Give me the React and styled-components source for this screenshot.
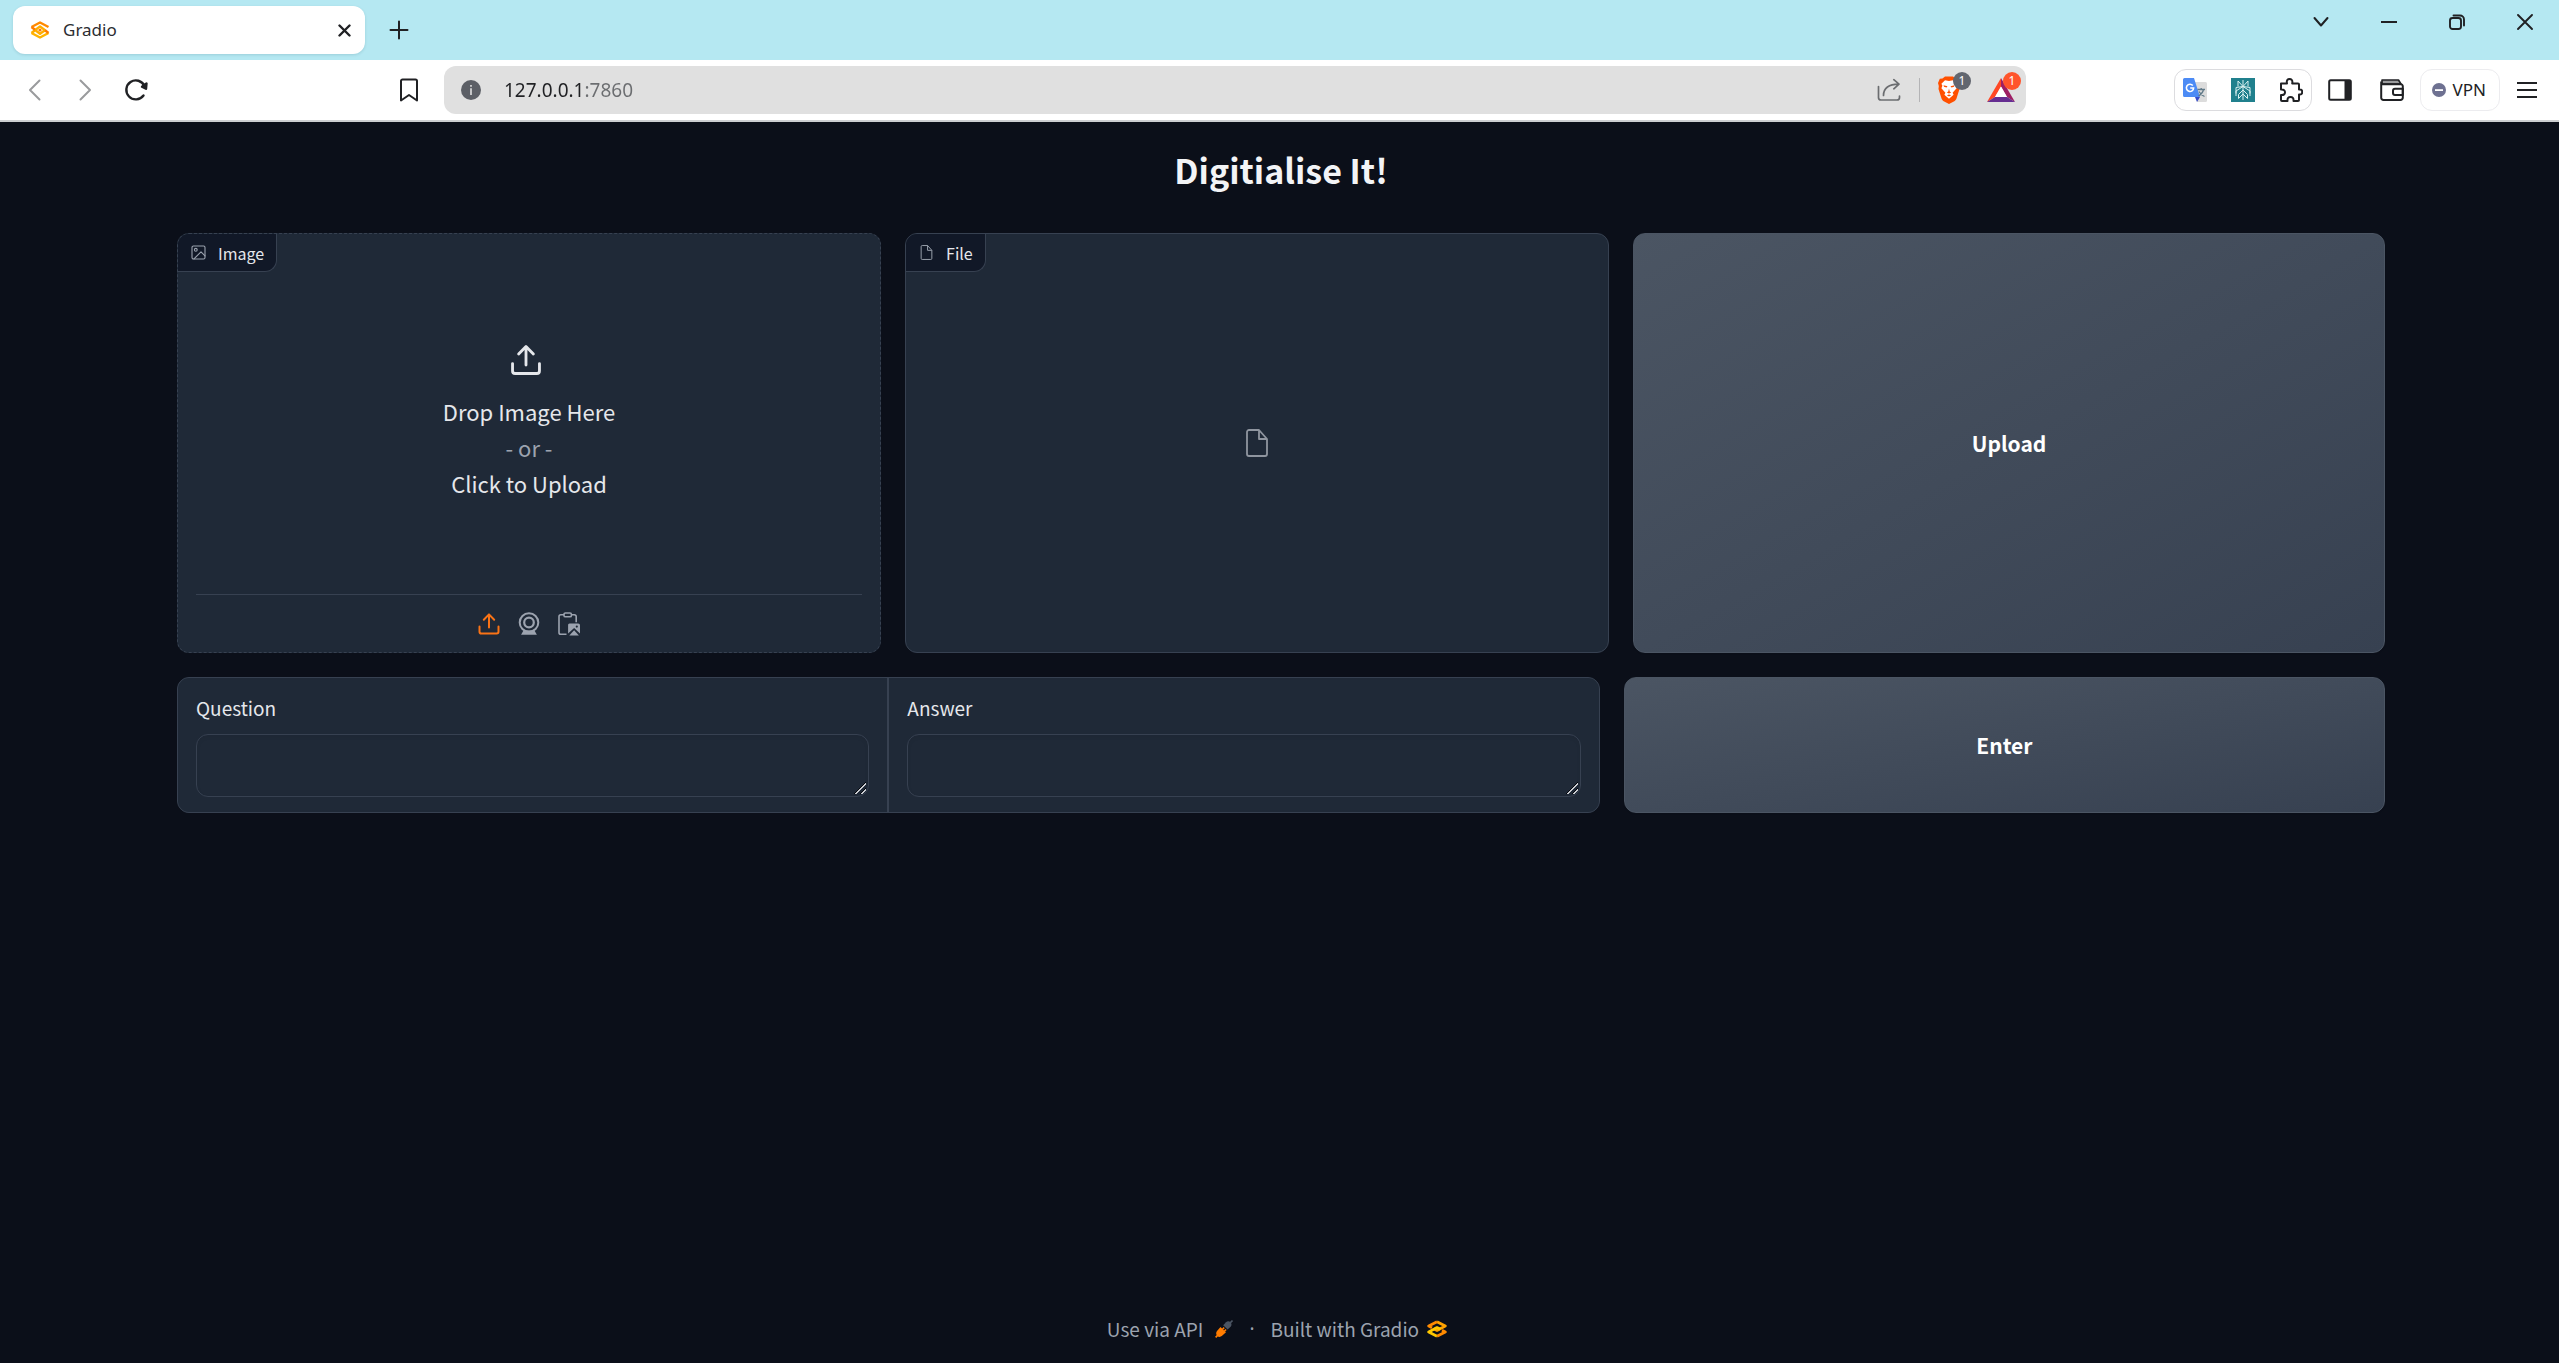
import React from "react";
import styled, { createGlobalStyle, css } from "styled-components";

const ui = '"Noto Sans CJK SC", "Noto Sans", sans-serif';
const chrome = '"Noto Sans", "Open Sans", sans-serif';

const GlobalStyle = createGlobalStyle`
  *, *::before, *::after { box-sizing: border-box; }
  body { margin: 0; background: #0b0f19; font-family: ${ui}; }
  button { font: inherit; color: inherit; border: 0; padding: 0; background: none; cursor: pointer; }
  a { color: inherit; text-decoration: none; }
  svg { display: block; flex: none; }
`;

const Window = styled.div`
  min-height: 100vh;
  display: flex;
  flex-direction: column;
`;

/* ---------- Browser frame ---------- */

const TabStrip = styled.div`
  height: 60px;
  flex: none;
  display: flex;
  align-items: center;
  gap: 14px;
  padding-left: 13px;
  background: #b5e8f2;
  font-family: ${chrome};
`;

const Tab = styled.div`
  width: 352px;
  height: 48px;
  display: flex;
  align-items: center;
  gap: 13px;
  padding: 0 10px 0 17px;
  border-radius: 12px;
  background: #fff;
  box-shadow: 0 1px 3px rgba(0, 60, 80, 0.15);
  font-size: 17px;
  line-height: 24px;
  color: #2b2d31;
`;

const TabTitle = styled.span`
  flex: 1;
`;

const IconButton = styled.button`
  width: ${(p) => p.$w || 24}px;
  height: ${(p) => p.$h || 24}px;
  flex: none;
  display: flex;
  align-items: center;
  justify-content: center;
  color: ${(p) => p.$color || "#202124"};
`;

const WindowControls = styled.div`
  display: flex;
  align-self: flex-start;
  margin-left: auto;
`;

const Toolbar = styled.div`
  height: 62px;
  flex: none;
  display: flex;
  align-items: center;
  padding: 0 16px 0 10px;
  background: #fff;
  border-bottom: 2px solid #cdcfd1;
  font-family: ${chrome};
`;

const NavGroup = styled.div`
  display: flex;
  flex: 382 1 0;
  min-width: 160px;
`;

const Omnibox = styled.div`
  flex: 1562 1 0;
  height: 48px;
  display: flex;
  align-items: center;
  margin-left: 18px;
  padding: 0 3px 0 17px;
  border-radius: 12px;
  background: #e0e0e0;
`;

/* The host is dark and the port grey: one gradient painted through the text. */
const Address = styled.input`
  flex: 1;
  min-width: 0;
  margin-left: 23px;
  padding: 0;
  border: 0;
  outline: 0;
  font: 19px/28px ${chrome};
  background: linear-gradient(90deg, #202124 81px, #6b6d70 81px);
  background-clip: text;
  -webkit-text-fill-color: transparent;
`;

const Separator = styled.span`
  width: 1px;
  height: 24px;
  margin: 0 3px 0 18px;
  background: #b4b4b6;
`;

const BadgedButton = styled.button`
  && {
    position: relative;
    width: 40px;
    height: 44px;
    display: flex;
    align-items: center;
    margin-left: 10px;
    padding-left: 4px;
  }
`;

const Badge = styled.span`
  position: absolute;
  top: 4px;
  left: 20px;
  width: 18px;
  height: 18px;
  border-radius: 9px;
  background: ${(p) => p.$bg};
  color: #fff;
  font-size: 12px;
  line-height: 18px;
  text-align: center;
`;

const Actions = styled.div`
  flex: 517 1 0;
  min-width: 385px;
  display: flex;
  align-items: center;
  justify-content: flex-end;
`;

const Pill = styled.div`
  height: 42px;
  display: flex;
  align-items: center;
  gap: 24px;
  margin-right: 2px;
  padding: 0 8px;
  border: 1px solid #dcdcdf;
  border-radius: 12px;
`;

const VpnButton = styled.button`
  && {
    height: 42px;
    display: flex;
    align-items: center;
    gap: 7px;
    margin: 0 11px 0 2px;
    padding: 0 13px 0 11px;
    border: 1px solid #ececef;
    border-radius: 12px;
    font-size: 17px;
    line-height: 24px;
    color: #202124;
  }
`;

/* ---------- Page ---------- */

const Page = styled.main`
  flex: 1;
  display: flex;
  flex-direction: column;
  padding: 22px 174px 16px 177px;
`;

const Title = styled.h1`
  margin: 0 0 37px;
  font-size: 34px;
  line-height: 52px;
  font-weight: 700;
  text-align: center;
  color: #f3f4f6;
`;

const Row = styled.div`
  display: flex;
  gap: 24px;
  margin-bottom: 24px;
`;

const surface = css`
  background: #1f2937;
  border: 1px solid #374151;
  border-radius: 12px;
`;

const Panel = styled.section`
  ${surface}
  border-style: ${(p) => (p.$dashed ? "dashed" : "solid")};
  position: relative;
  flex: 704 1 0;
  height: 420px;
  display: flex;
  flex-direction: column;
  overflow: hidden;
`;

const PanelLabel = styled.h2`
  position: absolute;
  top: 0;
  left: 0;
  height: 38px;
  margin: 0;
  display: flex;
  align-items: center;
  gap: 12px;
  padding: 0 12px 0 13px;
  border: solid #374151;
  border-width: 0 1px 1px 0;
  border-bottom-right-radius: 12px;
  background: #111827;
  font-size: 16px;
  line-height: 24px;
  font-weight: 400;
  color: #e5e7eb;

  svg { color: #9ca3af; }
`;

const DropZone = styled.button`
  && {
    flex: 1;
    display: flex;
    flex-direction: column;
    align-items: center;
    justify-content: center;
    padding-top: 16px;
    font-size: 22px;
    line-height: 36px;
    color: #e5e7eb;
  }

  svg { margin: 0 6px 16px 0; }
`;

const Muted = styled.span`
  color: #9ca3af;
`;

const Sources = styled.div`
  display: flex;
  justify-content: center;
  align-items: center;
  gap: 16px;
  height: 58px;
  margin: 0 18px;
  border-top: 1px solid #374151;
`;

const EmptyState = styled.div`
  flex: 1;
  display: flex;
  align-items: center;
  justify-content: center;
  color: #8f959f;
`;

const ActionButton = styled.button`
  && {
    flex: ${(p) => p.$grow} 1 0;
    border: 1px solid #4b5563;
    border-radius: 12px;
    background: linear-gradient(to bottom right, #4b5563, #374151);
    box-shadow: 0 1px 2px rgba(0, 0, 0, 0.05);
    font-size: 21px;
    line-height: 28px;
    font-weight: 700;
    color: #fff;
  }
`;

const Form = styled.div`
  ${surface}
  flex: 1422 1 0;
  display: flex;
  gap: 2px;
  background: #374151;
  overflow: hidden;
`;

const Field = styled.label`
  flex: 1;
  display: flex;
  flex-direction: column;
  gap: 12px;
  padding: 15px 18px;
  background: #1f2937;
  font-size: 19px;
  line-height: 29px;
  color: #e5e7eb;
`;

const TextArea = styled.textarea`
  height: 63px;
  padding: 12px;
  border: 1px solid #374151;
  border-radius: 12px;
  background: #1f2937;
  box-shadow: inset 0 2px 4px rgba(0, 0, 0, 0.05);
  font: inherit;
  color: inherit;
  resize: vertical;

  &::-webkit-resizer {
    background: linear-gradient(
        135deg,
        transparent 48%, #05070c 48% 53%, #c9ccd1 53% 61%,
        transparent 61% 72%, #05070c 72% 77%, #c9ccd1 77% 85%, transparent 85%
      )
      1px 1px / 12px 12px no-repeat;
  }
`;

const Footer = styled.footer`
  display: flex;
  align-items: center;
  justify-content: center;
  gap: 16px;
  margin-top: auto;
  padding-right: 8px;
  font-size: 19px;
  line-height: 36px;
  color: #9ca3af;
`;

const Dot = styled.span`
  font-family: ${chrome};
`;

const FooterLink = styled.a`
  display: flex;
  align-items: center;
  gap: ${(p) => p.$gap}px;
`;

/* ---------- Icons ---------- */

const Line = ({ size = 24, box = 24, w = 2, children, ...rest }) => (
  <svg width={size} height={size} viewBox={`0 0 ${box} ${box}`} fill="none" stroke="currentColor"
    strokeWidth={w} strokeLinecap="round" strokeLinejoin="round" aria-hidden="true" {...rest}>
    {children}
  </svg>
);

const GradioMark = () => (
  <svg width="20" height="18" viewBox="0 0 20 18" fill="none" strokeWidth="2.8" strokeLinejoin="round" aria-hidden="true">
    <path d="M10 1.800 18.300 6 10 10.400 6.600 8.700" stroke="#ffa200" />
    <path d="M10 16.200 1.700 12 10 7.600l3.400 1.700" stroke="#ffc800" />
    <path d="M10 1.800 1.700 6 5 7.800" stroke="#ff8a00" />
    <path d="M10 16.200 18.300 12 15 10.200" stroke="#ff8a00" />
  </svg>
);

const GradioFavicon = () => (
  <svg width="20" height="18" viewBox="0 0 20 18" fill="none" strokeWidth="2.4" strokeLinejoin="round" aria-hidden="true">
    <path d="M1.500 6 10 1.500 18.500 6" stroke="#ff8a00" />
    <path d="M1.500 12 10 16.500 18.500 12" stroke="#ffb300" />
    <path d="M1.500 12 5 9.200 10 5.400l5 3.800-5 3.600-4-3" stroke="#ffae00" />
    <path d="m15 9.200 3.500 2.800M1.500 6 5 8.800" stroke="#ff7c00" />
    <circle cx="10" cy="9" r="1.600" fill="#ff7c00" />
  </svg>
);

const UploadIcon = ({ size, color }) => (
  <Line size={size} style={{ color }}>
    <path d="M2.500 14.500v5.200a1.800 1.800 0 0 0 1.800 1.800h15.400a1.800 1.800 0 0 0 1.800-1.800v-5.200M12 15.500v-13M6.800 7.800 12 2.400l5.200 5.400" />
  </Line>
);

const FileIcon = ({ w = 22, h = 28 }) => (
  <svg width={w} height={h} viewBox="0 0 22 28" fill="none" stroke="currentColor" strokeWidth="1.800" strokeLinejoin="round" aria-hidden="true">
    <path d="M13 1H3a2 2 0 0 0-2 2v22a2 2 0 0 0 2 2h16a2 2 0 0 0 2-2V10ZM13 1v9h8" />
  </svg>
);

const ImageIcon = () => (
  <Line size={15} box={15} w={1.1}>
    <rect x="1" y="1" width="13" height="13" rx="1.400" />
    <circle cx="4.800" cy="4.800" r="1.400" />
    <path d="m3 13.800 7-7 4 4" />
  </Line>
);

const WebcamIcon = () => (
  <svg width="24" height="24" viewBox="0 0 24 24" fill="none" stroke="#9ca3af" strokeWidth="2" aria-hidden="true">
    <circle cx="12" cy="10.500" r="9.300" />
    <circle cx="12" cy="10.500" r="4.800" strokeWidth="2.200" />
    <path d="M6.500 18.600h11l2.400 4.200H4.100Z" fill="#9ca3af" stroke="none" />
  </svg>
);

const ClipboardIcon = () => (
  <svg width="24" height="24" viewBox="0 0 24 24" fill="none" stroke="#9ca3af" strokeWidth="1.600" strokeLinejoin="round" aria-hidden="true">
    <path d="M9.500 22.200H3.800A1.800 1.800 0 0 1 2 20.400V4.600a1.800 1.800 0 0 1 1.800-1.800H7M14 2.800h3.400a1.800 1.800 0 0 1 1.800 1.800v5.600" />
    <rect x="7" y="1" width="7.400" height="3.800" rx="1.400" />
    <path d="M12.500 11.500h8.700a1.800 1.800 0 0 1 1.800 1.800v8.200l-5.900-5.600-6 5.600v-8.200c0-1 .5-1.800 1.400-1.800Z" fill="#9ca3af" stroke="none" />
    <path d="m17.100 18.200 4.800 5.300h-9.600Z" fill="#9ca3af" stroke="none" />
    <circle cx="19.800" cy="14.600" r="1.100" fill="#1f2937" stroke="none" />
  </svg>
);

const PlugIcon = () => (
  <svg width="18" height="18" viewBox="0 0 18 18" aria-hidden="true">
    <path d="M2 11 5.500 7l1.800 1.700L9 10.400l2 1.800-4.200 3.900c-1.400 1.100-3.300 1-4.500-.1-1.400-1.300-1.500-3.600-.3-5Z" fill="#ff7c00" />
    <path d="m.6 17.400 3-3M7.300 9.500l1.900-1.900M9.200 11.400l1.900-1.900" stroke="#ff7c00" strokeWidth="1.600" />
    <path d="M8.200 5.200 11 2.300c1.300-1.300 3.200-1.200 4.500 0s1.300 3.200.1 4.500l-3 2.800Z" fill="#4b5563" />
    <path d="m14.500 3.500 3-3" stroke="#4b5563" strokeWidth="1.600" />
  </svg>
);

const ShareIcon = () => (
  <Line size={24} w={1.7}>
    <path d="M1.500 8.500v11a2.500 2.500 0 0 0 2.500 2.500h16a2.500 2.500 0 0 0 2.500-2.500V18M6.500 17.500C6.500 10 12 6.200 21.500 6.200M16.800 1.700l5.200 4.500-5.200 4.600" />
  </Line>
);

const BraveIcon = () => (
  <svg width="24" height="28" viewBox="0 0 24 28" aria-hidden="true">
    <path d="m5.500 2.500 2.500-2h8l2.500 2 2.700.3L23 7l-.8 3 .3 3-3 9.500c-.4 1.200-1.200 2-2.200 2.700L12 28l-5.300-2.800c-1-.7-1.800-1.500-2.200-2.700L1.500 13l.3-3L1 7l1.800-4.200Z" fill="#ff5000" />
    <path d="m12 5 4-.8 3.600 3.600-1 2 1 2.400-4 4.600 1 2-4.600 4-4.600-4 1-2-4-4.600 1-2.400-1-2L8 4.200Z" fill="#fff" />
    <path d="m6.500 9.200 4 1-1 1.200-2.500-.7ZM17.500 9.200l-4 1 1 1.200 2.500-.7ZM12 12.500l.7 3 1.500 1-2.200 1-2.200-1 1.500-1ZM9.800 19.200l2.200-.6 2.200.6-2.200 1.400Z" fill="#ff5000" />
  </svg>
);

const BatIcon = () => (
  <svg width="28" height="24" viewBox="0 0 28 24" aria-hidden="true">
    <path d="M14 0 0 24l8-5L14 8.500Z" fill="#ff4724" />
    <path d="m14 0 14 24-8-5L14 8.500Z" fill="#9e1f63" />
    <path d="M0 24h28l-8-5H8Z" fill="#662d91" />
    <path d="m14 8.500 6 10.500H8Z" fill="#fff" />
  </svg>
);

const TranslateIcon = () => (
  <svg width="24" height="24" viewBox="0 0 24 24" aria-hidden="true">
    <path d="M9 4h13.500A1.500 1.500 0 0 1 24 5.500v17a1.500 1.500 0 0 1-1.500 1.500H14Z" fill="#dcdcdc" />
    <path d="M1.500 0H11l6 19H1.500A1.500 1.500 0 0 1 0 17.500v-16A1.500 1.500 0 0 1 1.500 0Z" fill="#4c8bf5" />
    <path d="m12 19 5 0-3 5Z" fill="#3549c8" />
    <path d="M9.800 7.600A3.600 3.600 0 1 0 10.600 10H7.200" stroke="#fff" strokeWidth="1.600" fill="none" />
    <path d="M14.500 11.500h7.500M18.200 10v1.500M20.500 11.500c-.6 3-2.600 5-5 6.500M16 13.500c1 2 3 4 5.500 5" stroke="#607988" strokeWidth="1.300" fill="none" />
  </svg>
);

const PerplexityIcon = () => (
  <svg width="24" height="24" viewBox="0 0 24 24" fill="none" stroke="#d9f0f0" strokeWidth="1" aria-hidden="true">
    <path d="M0 0h24v24H0z" fill="#20808d" stroke="none" />
    <path d="M12 2v20M12 8.500 7 3v5.500M12 8.500 17 3v5.500M12 8.500 5 13v5M12 8.500l7 4.500v5M5 15.500V9.500L12 8.500l7 1v6M12 12l-4.500 4.500v4L12 16l4.500 4.500v-4Z" />
  </svg>
);

const PuzzleIcon = () => (
  <Line size={24} w={2}>
    <path d="M2 5.500h6c-.8-3.800 1-4.500 2.500-4.500S14 1.700 13.200 5.500H19a1 1 0 0 1 1 1v5c3-.4 3.200 1.300 3.200 2.500S22.800 16.800 20 16.500V22a1 1 0 0 1-1 1h-4.500c.3-3-1-4-3-4s-3.300 1-3 4H3a1 1 0 0 1-1-1v-5c3 .3 4-1 4-2.700S5 11.200 2 11.500Z" />
  </Line>
);

const SidebarIcon = () => (
  <svg width="24" height="22" viewBox="0 0 24 22" aria-hidden="true">
    <rect x="1.200" y="1.200" width="21.600" height="19.600" rx="1.500" fill="none" stroke="#202124" strokeWidth="2" />
    <path d="M16.500 1h6v20h-6z" fill="#202124" />
  </svg>
);

const WalletIcon = () => (
  <svg width="24" height="22" viewBox="0 0 24 22" fill="none" stroke="#202124" strokeWidth="2" strokeLinejoin="round" aria-hidden="true">
    <path d="M2 1h16.500L21 5H2Z" fill="#9a9b9d" strokeWidth="1.600" />
    <path d="M1.200 2.500v16A2.300 2.300 0 0 0 3.500 21h17a2.300 2.300 0 0 0 2.300-2.300V7.300A2 2 0 0 0 20.800 5.200H3.500a2.300 2.300 0 0 1-2.300-2.300" />
    <path d="M22.800 9.700H15a2 2 0 0 0-2 2V14a2 2 0 0 0 2 2h7.800Z" />
  </svg>
);

export default function App() {
  return (
    <Window>
      <GlobalStyle />
      <TabStrip>
        <Tab>
          <GradioFavicon />
          <TabTitle>Gradio</TabTitle>
          <IconButton $w={22} aria-label="Close tab">
            <Line size={13} box={13} w={2.4}><path d="m1.500 1.500 10 10M11.500 1.500l-10 10" /></Line>
          </IconButton>
        </Tab>
        <IconButton $w={40} aria-label="New tab">
          <Line size={20} box={20} w={2}><path d="M10 1.500v17M1.500 10h17" /></Line>
        </IconButton>
        <WindowControls>
          <IconButton $w={68} $h={44} aria-label="Search tabs">
            <Line size={16} box={16} w={2}><path d="m1.500 4 6.500 7.500L14.500 4" /></Line>
          </IconButton>
          <IconButton $w={68} $h={44} aria-label="Minimise">
            <Line size={16} box={16} w={2} strokeLinecap="butt"><path d="M0 8h16" /></Line>
          </IconButton>
          <IconButton $w={68} $h={44} aria-label="Restore">
            <Line size={16} box={16} w={1.9}>
              <rect x="1" y="4" width="11" height="11" rx="2.500" />
              <path d="M4.500 1.500H11a4 4 0 0 1 4 4V11.500" />
            </Line>
          </IconButton>
          <IconButton $w={68} $h={44} aria-label="Close window">
            <Line size={16} box={16} w={1.9}><path d="m1 1 14 14M15 1 1 15" /></Line>
          </IconButton>
        </WindowControls>
      </TabStrip>

      <Toolbar>
        <NavGroup>
          <IconButton $w={50} $color="#9a9b9d" aria-label="Back">
            <Line size={22} box={22} w={2}><path d="M15.500 1.500 6 11l9.500 9.500" /></Line>
          </IconButton>
          <IconButton $w={50} $color="#9a9b9d" aria-label="Forward">
            <Line size={22} box={22} w={2}><path d="m6.500 1.500 9.500 9.500-9.500 9.500" /></Line>
          </IconButton>
          <IconButton $w={52} aria-label="Reload">
            <Line size={24} box={24} w={2.4}>
              <path d="M19.500 17.500A9.500 9.500 0 1 1 20.500 8" />
              <path d="m22.500 5.500-.5 5.300-4-2Z" fill="currentColor" />
            </Line>
          </IconButton>
        </NavGroup>
        <IconButton $w={34} aria-label="Bookmark this tab">
          <Line size={24} box={24} w={2}><path d="M4 3a1.500 1.500 0 0 1 1.500-1.500h13A1.500 1.500 0 0 1 20 3v19.500l-8-5.500-8 5.500Z" /></Line>
        </IconButton>
        <Omnibox>
          <svg width="20" height="20" viewBox="0 0 20 20" aria-hidden="true">
            <circle cx="10" cy="10" r="10" fill="#5c5f66" />
            <path d="M9.200 5h1.600v1.800H9.200zM9.200 8.300h1.600V15H9.200z" fill="#e0e0e0" />
          </svg>
          <Address type="text" aria-label="Address" defaultValue="127.0.0.1:7860" />
          <IconButton $color="#6b6d70" aria-label="Share"><ShareIcon /></IconButton>
          <Separator />
          <BadgedButton aria-label="Shields">
            <BraveIcon />
            <Badge $bg="#62666f">1</Badge>
          </BadgedButton>
          <BadgedButton aria-label="Rewards">
            <BatIcon />
            <Badge $bg="#ff542b">1</Badge>
          </BadgedButton>
        </Omnibox>
        <Actions>
          <Pill>
            <IconButton aria-label="Translate"><TranslateIcon /></IconButton>
            <IconButton aria-label="Perplexity"><PerplexityIcon /></IconButton>
            <IconButton aria-label="Extensions"><PuzzleIcon /></IconButton>
          </Pill>
          <IconButton $w={52} aria-label="Sidebar"><SidebarIcon /></IconButton>
          <IconButton $w={52} aria-label="Wallet"><WalletIcon /></IconButton>
          <VpnButton>
            <svg width="14" height="14" viewBox="0 0 14 14" aria-hidden="true">
              <circle cx="7" cy="7" r="7" fill="#6e7191" />
              <path d="M3 6.200h8v1.800H3z" fill="#fff" />
            </svg>
            VPN
          </VpnButton>
          <IconButton $w={32} aria-label="Menu">
            <Line size={22} box={22} w={2} strokeLinecap="butt"><path d="M1 4h20M1 11h20M1 18h20" /></Line>
          </IconButton>
        </Actions>
      </Toolbar>

      <Page>
        <Title>Digitialise It!</Title>
        <Row>
          <Panel $dashed>
            <PanelLabel><ImageIcon />Image</PanelLabel>
            <DropZone>
              <UploadIcon size={34} color="#e5e7eb" />
              <span>Drop Image Here</span>
              <Muted>- or -</Muted>
              <span>Click to Upload</span>
            </DropZone>
            <Sources>
              <IconButton aria-label="Upload file"><UploadIcon size={24} color="#f97316" /></IconButton>
              <IconButton aria-label="Use webcam"><WebcamIcon /></IconButton>
              <IconButton aria-label="Paste from clipboard"><ClipboardIcon /></IconButton>
            </Sources>
          </Panel>
          <Panel>
            <PanelLabel><FileIcon w={15} h={15} />File</PanelLabel>
            <EmptyState><FileIcon /></EmptyState>
          </Panel>
          <ActionButton $grow={752}>Upload</ActionButton>
        </Row>
        <Row>
          <Form>
            <Field>Question<TextArea rows={1} /></Field>
            <Field>Answer<TextArea rows={1} /></Field>
          </Form>
          <ActionButton $grow={760}>Enter</ActionButton>
        </Row>
        <Footer>
          <FooterLink href="#api" $gap={12}>Use via API <PlugIcon /></FooterLink>
          <Dot>·</Dot>
          <FooterLink href="#gradio" $gap={8}>Built with Gradio <GradioMark /></FooterLink>
        </Footer>
      </Page>
    </Window>
  );
}
